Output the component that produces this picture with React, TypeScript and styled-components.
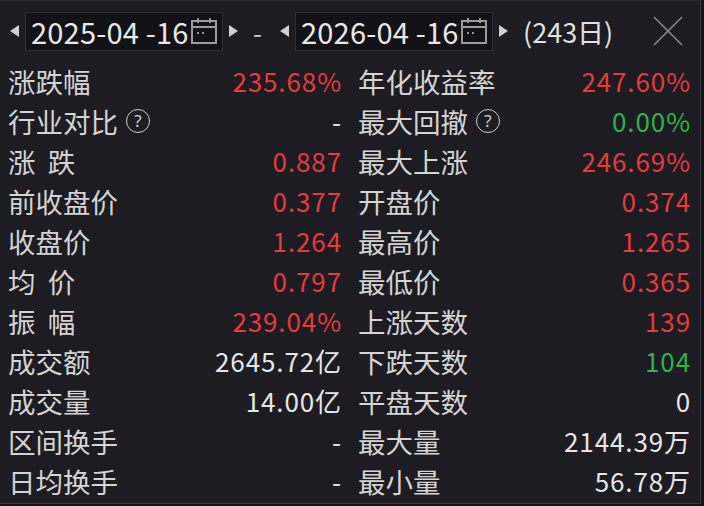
import React from "react";
import styled, { createGlobalStyle } from "styled-components";

const Global = createGlobalStyle`
  html, body { margin: 0; padding: 0; background: #141418; }
  body { font-family: "Noto Sans CJK SC", "Noto Sans", sans-serif; }
`;

const Panel = styled.div`
  width: 700px;
  height: 502px;
  background: #1c1c22;
  border-right: 1px solid #3a3a42;
  border-bottom: 1px solid #3a3a42;
  border-top: 1px solid #26262c;
  box-sizing: content-box;
  display: flex;
  flex-direction: column;
  overflow: hidden;
`;

const Header = styled.div`
  height: 60px;
  display: flex;
  align-items: center;
  padding-left: 9px;
  box-sizing: border-box;
  color: #e4e4e4;
`;

const Arrow = styled.span<{ $dir: "l" | "r" }>`
  width: 0;
  height: 0;
  border-top: 6px solid transparent;
  border-bottom: 6px solid transparent;
  ${(p) => (p.$dir === "l" ? "border-right: 9px solid #d0d0d0;" : "border-left: 9px solid #d0d0d0;")}
  margin: ${(p) => (p.$dir === "l" ? "0 6px 0 1px" : "0 0 0 6px")};
`;

const DateBox = styled.div`
  width: 198px;
  height: 39px;
  box-sizing: border-box;
  background: #131317;
  border: 1px solid #2e2e35;
  display: flex;
  align-items: center;
  padding-left: 5px;
  font-size: 29px;
  letter-spacing: 0.2px;
  color: #e8e8e8;
  white-space: pre;
`;

const Cal = styled.svg`
  margin-left: 1px;
  flex: none;
`;

const Dash = styled.span`
  font-size: 26px;
  color: #c8c8c8;
  margin: 0 17px 0 15px;
`;

const Days = styled.span`
  font-size: 27px;
  color: #e0e0e0;
  margin-left: 15px;
`;

const Close = styled.svg`
  margin-left: 40px;
`;

const Grid = styled.div`
  display: grid;
  grid-template-columns: 333px 332px;
  column-gap: 17px;
  padding-left: 8px;
  grid-auto-rows: 40px;
`;

const Cell = styled.div`
  display: flex;
  align-items: center;
  justify-content: space-between;
  line-height: 40px;
`;

const Label = styled.span`
  color: #d4d4d4;
  display: flex;
  align-items: center;
  white-space: pre;
  font-size: 27.5px;
`;

const Value = styled.span<{ $c: string }>`
  color: ${(p) => p.$c};
  font-size: 26px;
  letter-spacing: 0.9px;
  margin-right: -1px;
`;

const Help = styled.span`
  flex: none;
  width: 24px;
  height: 24px;
  border: 1.6px solid #cfcfcf;
  border-radius: 50%;
  box-sizing: border-box;
  font-size: 17px;
  line-height: 21px;
  text-align: center;
  color: #d0d0d0;
  margin-left: 8px;
  font-family: "Noto Sans", sans-serif;
`;

const RED = "#e63a3d";
const GREEN = "#2db34a";
const WHITE = "#e6e6e6";

type Item = { l: string; v: string; c: string; help?: boolean };

const rows: [Item, Item][] = [
  [{ l: "涨跌幅", v: "235.68%", c: RED }, { l: "年化收益率", v: "247.60%", c: RED }],
  [{ l: "行业对比", v: "-", c: WHITE, help: true }, { l: "最大回撤", v: "0.00%", c: GREEN, help: true }],
  [{ l: "涨  跌", v: "0.887", c: RED }, { l: "最大上涨", v: "246.69%", c: RED }],
  [{ l: "前收盘价", v: "0.377", c: RED }, { l: "开盘价", v: "0.374", c: RED }],
  [{ l: "收盘价", v: "1.264", c: RED }, { l: "最高价", v: "1.265", c: RED }],
  [{ l: "均  价", v: "0.797", c: RED }, { l: "最低价", v: "0.365", c: RED }],
  [{ l: "振  幅", v: "239.04%", c: RED }, { l: "上涨天数", v: "139", c: RED }],
  [{ l: "成交额", v: "2645.72亿", c: WHITE }, { l: "下跌天数", v: "104", c: GREEN }],
  [{ l: "成交量", v: "14.00亿", c: WHITE }, { l: "平盘天数", v: "0", c: WHITE }],
  [{ l: "区间换手", v: "-", c: WHITE }, { l: "最大量", v: "2144.39万", c: WHITE }],
  [{ l: "日均换手", v: "-", c: WHITE }, { l: "最小量", v: "56.78万", c: WHITE }],
];

const CalIcon = () => (
  <Cal width="28" height="28" viewBox="0 0 28 28" fill="none" stroke="#9a9a9a" strokeWidth="2">
    <rect x="2" y="4" width="24" height="22" />
    <line x1="2" y1="10" x2="26" y2="10" />
    <line x1="8" y1="1" x2="8" y2="6" />
    <line x1="20" y1="1" x2="20" y2="6" />
    <rect x="7" y="15" width="2" height="2" fill="#9a9a9a" stroke="none" />
    <rect x="12" y="15" width="2" height="2" fill="#9a9a9a" stroke="none" />
  </Cal>
);

const Cell2 = ({ it }: { it: Item }) => (
  <Cell>
    <Label>
      {it.l}
      {it.help && <Help>?</Help>}
    </Label>
    <Value $c={it.c}>{it.v}</Value>
  </Cell>
);

export default function App() {
  return (
    <>
      <Global />
      <Panel>
        <Header>
          <Arrow $dir="l" />
          <DateBox>
            {"2025-04 -16"}
            <CalIcon />
          </DateBox>
          <Arrow $dir="r" />
          <Dash>-</Dash>
          <Arrow $dir="l" />
          <DateBox>
            {"2026-04 -16"}
            <CalIcon />
          </DateBox>
          <Arrow $dir="r" />
          <Days>(243日)</Days>
          <Close width="30" height="30" viewBox="0 0 30 30" stroke="#8a8a8a" strokeWidth="1.6">
            <line x1="1" y1="1" x2="29" y2="29" />
            <line x1="29" y1="1" x2="1" y2="29" />
          </Close>
        </Header>
        <Grid>
          {rows.map(([a, b], i) => (
            <React.Fragment key={i}>
              <Cell2 it={a} />
              <Cell2 it={b} />
            </React.Fragment>
          ))}
        </Grid>
      </Panel>
    </>
  );
}
